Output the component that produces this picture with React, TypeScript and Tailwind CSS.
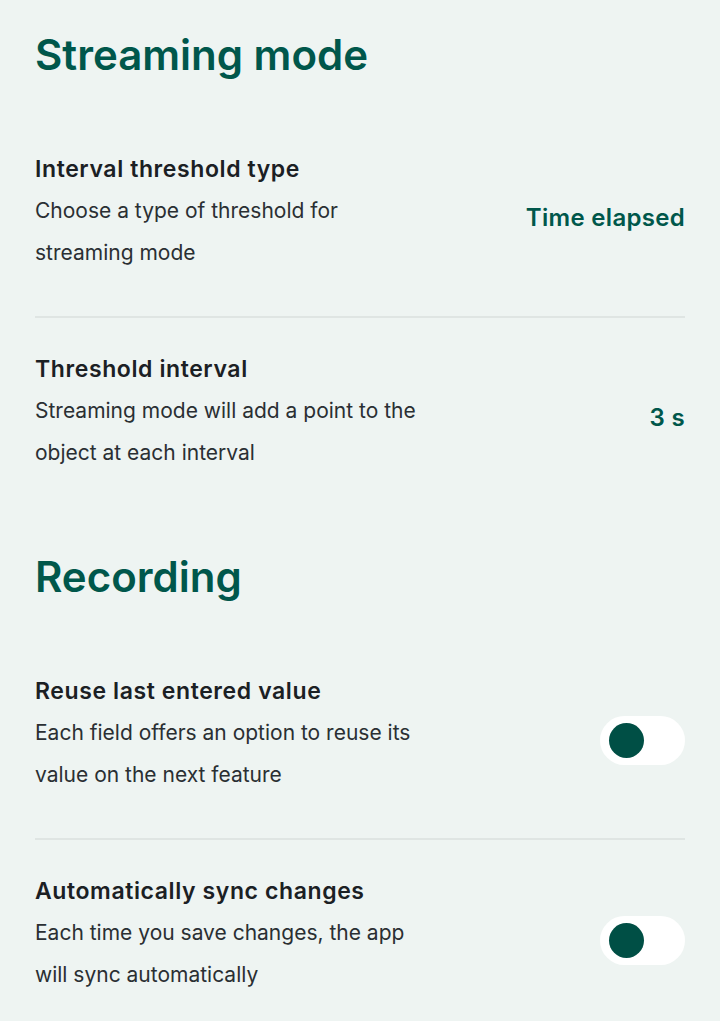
type Row = {
  title: string;
  text: string;
  value?: string;
  toggle?: boolean;
};

const streaming: Row[] = [
  {
    title: "Interval threshold type",
    text: "Choose a type of threshold for streaming mode",
    value: "Time elapsed",
  },
  {
    title: "Threshold interval",
    text: "Streaming mode will add a point to the object at each interval",
    value: "3 s",
  },
];

const recording: Row[] = [
  {
    title: "Reuse last entered value",
    text: "Each field offers an option to reuse its value on the next feature",
    toggle: true,
  },
  {
    title: "Automatically sync changes",
    text: "Each time you save changes, the app will sync automatically",
    toggle: true,
  },
];

function Toggle() {
  return (
    <div className="mt-[8px] flex h-[49px] w-[85px] shrink-0 items-center rounded-full bg-white pl-[9px]">
      <div className="size-[35px] rounded-full bg-[#004f45]" />
    </div>
  );
}

function SettingRow({ row, divider }: { row: Row; divider: boolean }) {
  return (
    <div className={divider ? "border-b-2 border-[#dfe5e3]" : ""}>
      <div className="flex items-center justify-between gap-4 pb-[42px] pt-[37px]">
        <div className="max-w-[395px]">
          <h3 className="whitespace-nowrap text-[23px] font-semibold leading-[28px] tracking-[0.6px] text-[#1b2024]">
            {row.title}
          </h3>
          <p className="mt-[7px] text-[21px] leading-[42px] text-[#2a2f33]">{row.text}</p>
        </div>
        {row.toggle ? (
          <Toggle />
        ) : (
          <span className="mt-[6px] text-[24px] font-semibold tracking-[0.3px] text-[#00574b]">{row.value}</span>
        )}
      </div>
    </div>
  );
}

function Section({ title, rows, className }: { title: string; rows: Row[]; className?: string }) {
  return (
    <section className={className}>
      <h2 className="text-[42px] font-semibold leading-[50px] text-[#00574b]">{title}</h2>
      <div className="mt-[38px]">
        {rows.map((row, i) => (
          <SettingRow key={row.title} row={row} divider={i < rows.length - 1} />
        ))}
      </div>
    </section>
  );
}

export default function App() {
  return (
    <main
      className="min-h-screen bg-[#eef4f2] px-[35px] pt-[30px]"
      style={{ fontFamily: "Inter, 'Noto Sans', sans-serif" }}
    >
      <Section title="Streaming mode" rows={streaming} />
      <Section title="Recording" rows={recording} className="mt-[36px]" />
    </main>
  );
}
